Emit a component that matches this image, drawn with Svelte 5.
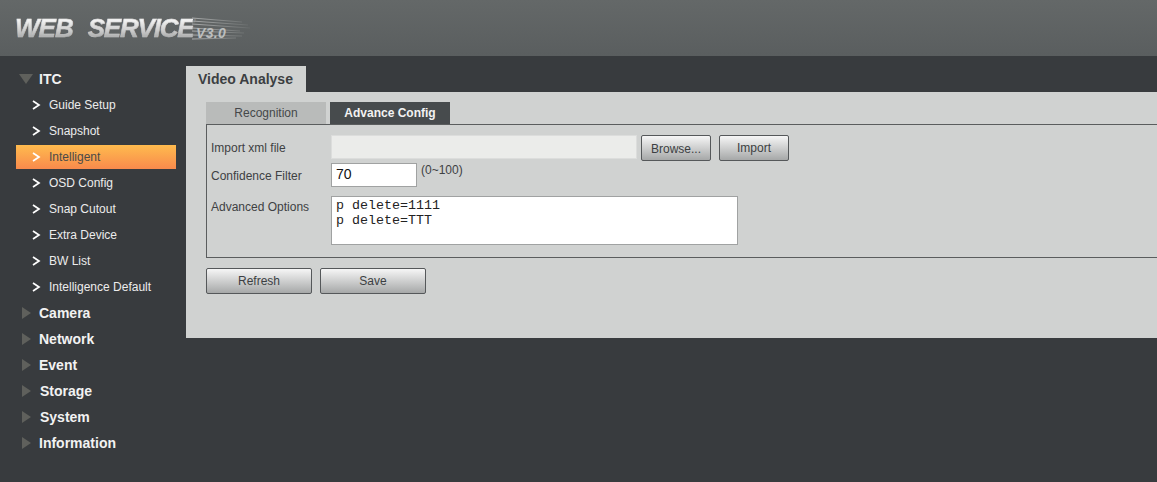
<script>
	const subItems = [
		'Guide Setup',
		'Snapshot',
		'Intelligent',
		'OSD Config',
		'Snap Cutout',
		'Extra Device',
		'BW List',
		'Intelligence Default'
	];
	const groups = ['Camera', 'Network', 'Event', 'Storage', 'System', 'Information'];
	const active = 'Intelligent';
	// speed lines behind the version number: [startY, endX, endY]
	const speedLines = [
		[1, 50, 5],
		[4, 56, 8],
		[7, 58, 11],
		[11, 48, 14],
		[14, 52, 16],
		[18, 50, 19],
		[22, 44, 21]
	];
</script>

<div class="page">
	<header class="top">
		<div class="logo">
			<span class="logo-word">WEB</span>
			<span class="logo-word second">SERVICE</span>
			<svg class="logo-lines" width="58" height="26" viewBox="0 0 58 26">
				<defs>
					<linearGradient id="fade" gradientUnits="userSpaceOnUse" x1="0" y1="0" x2="58" y2="0">
						<stop offset="0" stop-color="#a9abab" />
						<stop offset="1" stop-color="#666a6a" />
					</linearGradient>
				</defs>
				{#each speedLines as [y, x2, y2]}
					<path d={`M0 ${y} L${x2} ${y2}`} />
				{/each}
			</svg>
			<span class="logo-version">V3.0</span>
		</div>
	</header>

	<div class="body">
		<nav class="side">
			<div class="group">
				<svg class="tri" width="14" height="10" viewBox="0 0 14 10"><path d="M0 0h14L7 10z" /></svg>
				<span>ITC</span>
			</div>
			{#each subItems as item}
				<div class="sub" class:on={item === active}>
					<svg class="chev" width="9" height="10" viewBox="0 0 9 10"><path d="M1 1l6 4-6 4" /></svg>
					<span>{item}</span>
				</div>
			{/each}
			{#each groups as group}
				<div class="group closed">
					<svg class="tri" width="10" height="14" viewBox="0 0 10 14"><path d="M1 1l9 6-9 6z" /></svg>
					<span class:nudge={group === 'Storage' || group === 'System'}>{group}</span>
				</div>
			{/each}
		</nav>

		<main class="main">
			<div class="title-tab">Video Analyse</div>
			<section class="panel">
				<div class="tabs">
					<div class="tab">Recognition</div>
					<div class="tab current">Advance Config</div>
				</div>
				<div class="box">
					<div class="row first">
						<span class="label">Import xml file</span>
						<input class="file" type="text" disabled />
						<button class="btn small browse">Browse...</button>
						<button class="btn small import">Import</button>
					</div>
					<div class="row second-row">
						<span class="label">Confidence Filter</span>
						<input class="num" type="text" value="70" />
						<span class="hint">(0~100)</span>
					</div>
					<div class="row third">
						<span class="label">Advanced Options</span>
						<textarea class="opts" value={'p delete=1111\np delete=TTT'}></textarea>
					</div>
				</div>
				<div class="actions">
					<button class="btn wide">Refresh</button>
					<button class="btn wide">Save</button>
				</div>
			</section>
		</main>
	</div>
</div>

<style>
	:global(body) {
		margin: 0;
		background: #383b3e;
		overflow: hidden;
	}

	.page {
		width: 1157px;
		height: 482px;
		background: #383b3e;
		font-family: 'Liberation Sans', Arial, sans-serif;
		font-size: 12px;
		overflow: hidden;
	}

	.top {
		height: 56px;
		background: linear-gradient(#646868, #5a5e5f);
		box-sizing: border-box;
		padding: 14px 0 0 15px;
	}

	.logo {
		position: relative;
		display: flex;
		align-items: baseline;
		width: 230px;
		height: 30px;
	}

	.logo-word {
		font-size: 26px;
		line-height: 29px;
		font-weight: bold;
		font-style: italic;
		letter-spacing: -1px;
		background: linear-gradient(#f4f4f4 20%, #cfcfcf 55%, #8f9191 100%);
		background-clip: text;
		-webkit-background-clip: text;
		color: transparent;
		-webkit-text-stroke: 0.5px rgba(205, 205, 205, 0.55);
	}

	.logo-word.second {
		margin-left: 15px;
		letter-spacing: -1.2px;
	}

	.logo-version {
		position: absolute;
		left: 181px;
		top: 11px;
		font-size: 14px;
		font-weight: bold;
		font-style: italic;
		letter-spacing: 0.3px;
		color: #bcbebe;
	}

	.logo-lines {
		position: absolute;
		left: 177px;
		top: 3px;
	}

	.logo-lines path {
		fill: none;
		stroke: url(#fade);
		stroke-width: 1;
	}

	.body {
		display: flex;
		padding-top: 10px;
	}

	.side {
		width: 186px;
		flex: none;
		display: flex;
		flex-direction: column;
	}

	.group {
		height: 26px;
		display: flex;
		align-items: center;
		padding-left: 19px;
		font-size: 14px;
		font-weight: bold;
		color: #f2f2f2;
		box-sizing: border-box;
	}

	.group .tri {
		flex: none;
		fill: #5f605c;
		margin-right: 6px;
	}

	.group.closed {
		padding-left: 21px;
	}

	.group.closed .tri {
		margin-right: 8px;
	}

	.group .nudge {
		margin-left: 1px;
	}

	.sub {
		height: 24px;
		margin: 1px 10px 1px 16px;
		display: flex;
		align-items: center;
		padding-left: 16px;
		color: #ececec;
	}

	.sub.on {
		background: linear-gradient(#ffbb4e, #f88a4c);
		color: #4a4a48;
	}

	.chev {
		flex: none;
		margin-right: 8px;
		fill: none;
		stroke: #fff;
		stroke-width: 1.7;
	}

	.main {
		flex: 1;
		min-width: 0;
	}

	.title-tab {
		width: 120px;
		height: 26px;
		line-height: 27px;
		background: #d0d2d1;
		box-sizing: border-box;
		padding-left: 12px;
		font-size: 14px;
		font-weight: bold;
		color: #3c3f42;
	}

	.panel {
		height: 246px;
		background: #d0d2d1;
		box-sizing: border-box;
		padding: 10px 0 0 20px;
	}

	.tabs {
		display: flex;
		gap: 4px;
	}

	.tab {
		width: 120px;
		height: 22px;
		line-height: 22px;
		text-align: center;
		background: #b9bbba;
		color: #45484a;
	}

	.tab.current {
		background: #474b4d;
		color: #f2f2f2;
		font-weight: bold;
	}

	.box {
		height: 134px;
		box-sizing: border-box;
		border: 1px solid #5a5d5e;
		border-right: none;
		margin-right: -2px;
		padding: 10px 0 0 4px;
		color: #3e4143;
	}

	.row {
		display: flex;
		align-items: flex-start;
	}

	.label {
		width: 120px;
		flex: none;
		line-height: 26px;
	}

	.first {
		height: 28px;
	}

	.second-row {
		height: 33px;
	}

	.second-row .label {
		line-height: 27px;
	}

	.third .label {
		line-height: 22px;
	}

	.file {
		width: 306px;
		height: 24px;
		box-sizing: border-box;
		border: 1px solid #dcdddc;
		background: #ebecea;
		padding: 0;
		margin: 0;
	}

	.num {
		width: 86px;
		height: 24px;
		box-sizing: border-box;
		border: 1px solid #a0a2a2;
		background: #fff;
		margin: 0;
		padding: 0 4px 2px;
		font: 14px 'Liberation Sans', Arial, sans-serif;
		color: #111;
		outline: none;
	}

	.hint {
		margin-left: 4px;
		line-height: 14px;
		color: #3e4143;
	}

	.opts {
		width: 407px;
		height: 49px;
		box-sizing: border-box;
		border: 1px solid #a0a2a2;
		background: #fff;
		margin: 0;
		padding: 1px 4px;
		font: 13.33px/15px 'Liberation Mono', 'Courier New', monospace;
		color: #222;
		resize: none;
		overflow: hidden;
		outline: none;
	}

	.btn {
		height: 26px;
		box-sizing: border-box;
		border: 1px solid #55585a;
		border-radius: 2px;
		background: linear-gradient(#f6f6f6, #a6a8a8);
		color: #3c3f42;
		font: 12px 'Liberation Sans', Arial, sans-serif;
		padding: 0;
	}

	.btn.small {
		width: 70px;
		margin-left: 4px;
	}

	.btn.browse {
		padding-top: 2px;
	}

	.btn.import {
		margin-left: 8px;
	}

	.btn.wide {
		width: 106px;
	}

	.actions {
		display: flex;
		gap: 8px;
		margin-top: 10px;
	}
</style>
